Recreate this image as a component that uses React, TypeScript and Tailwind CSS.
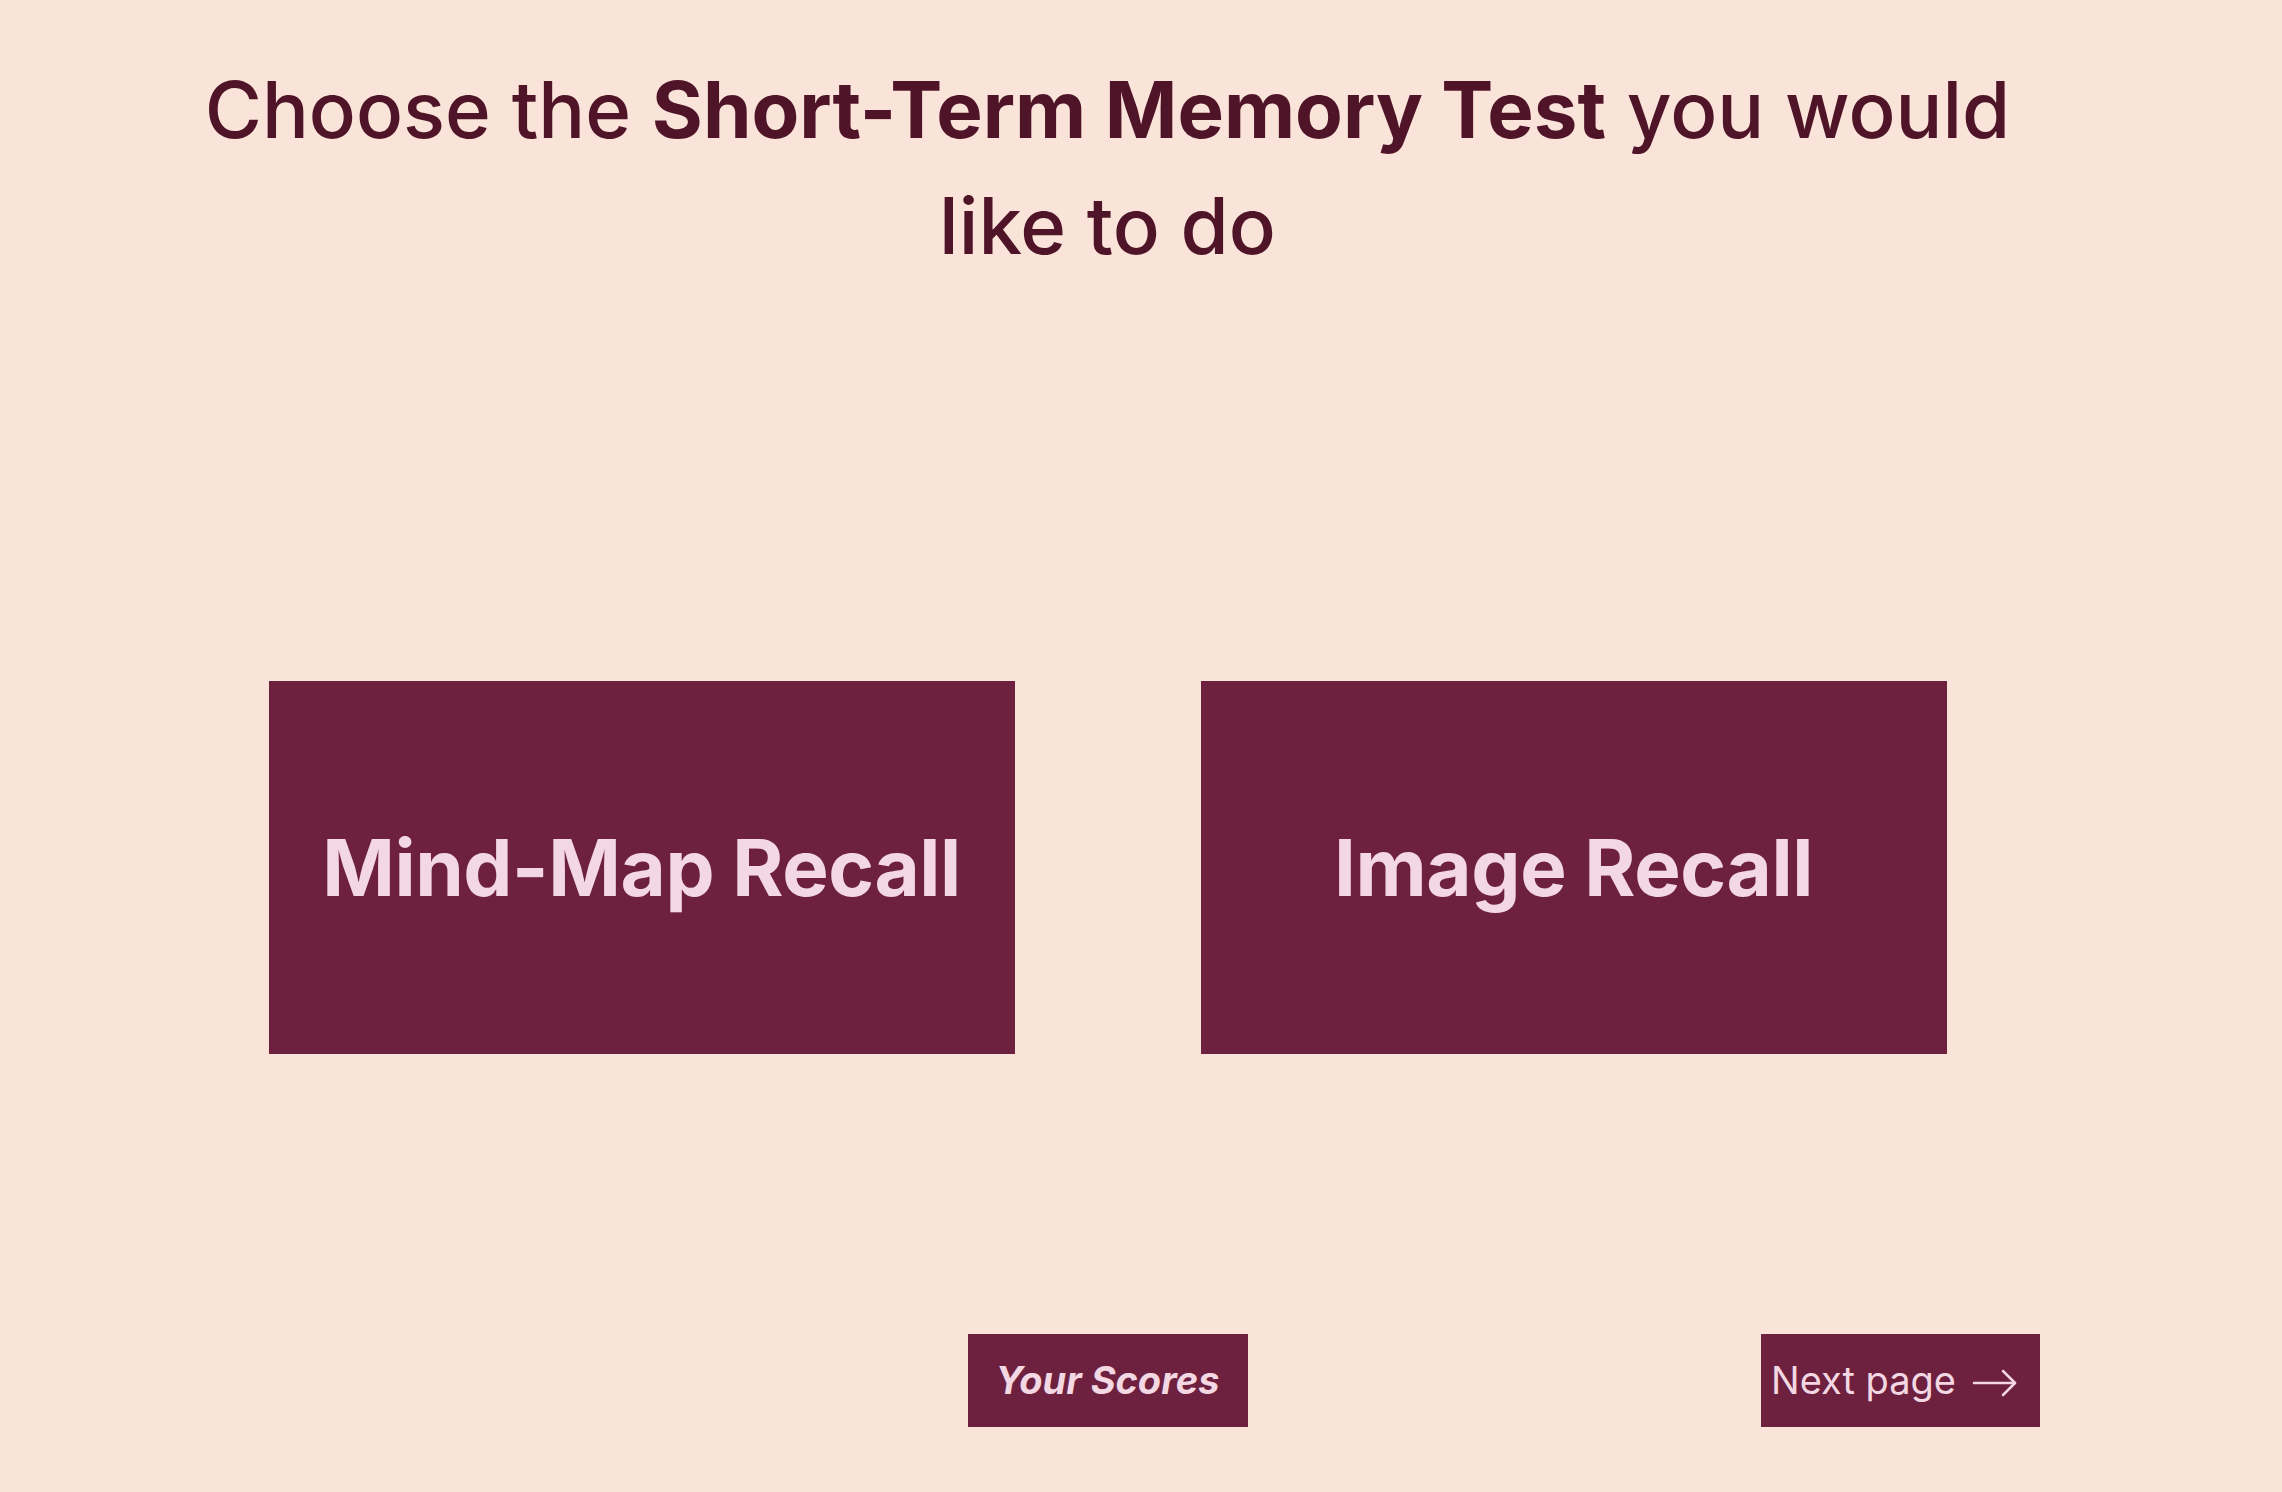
export default function App() {
    return (
        <div className="min-h-screen w-full bg-[#fae4da]" style={{ fontFamily: 'Inter, "Noto Sans", sans-serif' }}>
            <div className="w-[2215px] flex flex-col">
                <h1 className="mx-auto mt-[52px] w-[1860px] text-center text-[78px] leading-[116px] font-medium text-[#4f1428]">
                    Choose the <span className="font-bold">Short-Term Memory Test</span> you would like to do
                </h1>

                <div className="mt-[397px] flex justify-center gap-[186px]">
                    <button className="w-[746px] h-[373px] bg-[#6d213e] flex items-center justify-center text-[78px] font-bold tracking-[-0.005em] text-[#f3d7e2]">
                        Mind-Map Recall
                    </button>
                    <button className="w-[746px] h-[373px] bg-[#6d213e] flex items-center justify-center text-[78px] font-bold tracking-[-0.005em] text-[#f3d7e2]">
                        Image Recall
                    </button>
                </div>

                <div className="mt-[280px] grid grid-cols-[1fr_auto_1fr] items-center">
                    <div />
                    <button className="w-[280px] h-[93px] bg-[#6d213e] flex items-center justify-center text-[38px] font-bold italic text-[#f3d7e2]">
                        Your Scores
                    </button>
                    <div className="flex justify-end pr-[175px]">
                        <button className="w-[279px] h-[93px] bg-[#6d213e] flex items-center pl-[10px] text-[38px] text-[#f3d7e2]">
                            Next page
                            <svg className="ml-[16px] mt-[4px] w-[46px] h-[28px]" viewBox="0 0 46 28" fill="none" stroke="currentColor" strokeWidth="2.5" strokeLinecap="round" strokeLinejoin="round">
                                <path d="M2 14h41" />
                                <path d="M31 2l12 12-12 12" />
                            </svg>
                        </button>
                    </div>
                </div>
            </div>
        </div>
    )
}
